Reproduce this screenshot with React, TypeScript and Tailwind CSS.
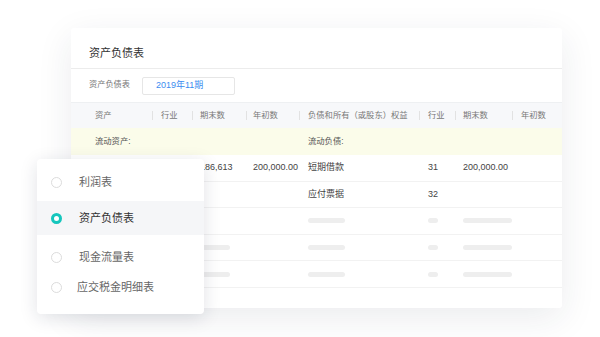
// App.tsx

type Col = { w: number; pl: number };

const cols: Col[] = [
  { w: 81, pl: 24 },
  { w: 40, pl: 9 },
  { w: 54, pl: 8 },
  { w: 53, pl: 7 },
  { w: 120, pl: 9 },
  { w: 36, pl: 9 },
  { w: 57, pl: 8 },
  { w: 50, pl: 9 },
];

const headers = ["资产", "行业", "期末数", "年初数", "负债和所有（或股东）权益", "行业", "期末数", "年初数"];

type Cell = string | { bar: number } | null;

const rows: Cell[][] = [
  [null, null, "186,613", "200,000.00", "短期借款", "31", "200,000.00", null],
  [null, null, null, null, "应付票据", "32", null, null],
  [null, null, null, null, { bar: 37 }, { bar: 10 }, { bar: 49 }, null],
  [{ bar: 40 }, null, { bar: 30 }, null, { bar: 37 }, { bar: 10 }, { bar: 49 }, null],
  [{ bar: 40 }, null, { bar: 30 }, null, { bar: 37 }, { bar: 10 }, { bar: 49 }, null],
];

const menu = [
  { label: "利润表", active: false },
  { label: "资产负债表", active: true },
  { label: "现金流量表", active: false },
  { label: "应交税金明细表", active: false },
];

const font = { fontFamily: '"Liberation Sans", "Noto Sans CJK SC", sans-serif' };

function Radio({ active }: { active: boolean }) {
  return active ? (
    <span className="w-[11px] h-[11px] rounded-full border-[3px] border-[#15c6bd] bg-white" />
  ) : (
    <span className="w-[11px] h-[11px] rounded-full border border-[#dcdcdc] bg-white" />
  );
}

export default function App() {
  return (
    <div className="relative w-[600px] h-[337px] bg-white overflow-hidden" style={font}>
      {/* Main card */}
      <div className="ml-[71px] mt-[28px] w-[491px] h-[280px] bg-white rounded-[3px] shadow-[0_10px_36px_rgba(30,40,70,0.09)]">
        <div className="h-[41px] pt-[17px] pl-[18px] border-b border-[#ececec] text-[11px] text-[#333]">
          资产负债表
        </div>

        <div className="h-[33px] flex items-center pl-[18px]">
          <span className="text-[8.2px] text-[#777]">资产负债表</span>
          <div className="ml-[12px] w-[93px] h-[18px] border border-[#e6e6e6] rounded-[2px] flex items-center pl-[13px] text-[9px] text-[#3b8cf0]">
            2019年11期
          </div>
        </div>

        {/* Header */}
        <div className="flex h-[26px] bg-[#f7f8fa] border-t border-[#eef0f2]">
          {cols.map((c, i) => (
            <div key={i} className="flex items-center" style={{ width: c.w }}>
              {i > 0 && <span className="w-px h-[9px] bg-[#e2e2e2]" />}
              <span
                className="text-[8.3px] text-[#777] whitespace-nowrap"
                style={{ marginLeft: i === 0 ? c.pl : c.pl - 1 }}
              >
                {headers[i]}
              </span>
            </div>
          ))}
        </div>

        {/* Section row */}
        <div className="flex h-[27px] bg-[#fbfcea] items-center text-[8.3px] text-[#555]">
          <span className="pl-[24px] w-[228px]">流动资产:</span>
          <span className="pl-[9px]">流动负债:</span>
        </div>

        {rows.map((r, ri) => (
          <div key={ri} className="flex h-[26.6px] border-b border-[#f2f2f2]">
            {r.map((cell, ci) => (
              <div
                key={ci}
                className="flex items-center text-[9px] text-[#444] whitespace-nowrap"
                style={{ width: cols[ci].w, paddingLeft: cols[ci].pl }}
              >
                {typeof cell === "string" && cell}
                {cell && typeof cell === "object" && (
                  <span className="h-[5px] rounded-full bg-[#eeeeee]" style={{ width: cell.bar }} />
                )}
              </div>
            ))}
          </div>
        ))}
      </div>

      {/* Dropdown overlay */}
      <div className="absolute left-[37px] top-[159px] w-[167px] h-[155px] bg-white rounded-[4px] shadow-[0_4px_18px_rgba(20,30,60,0.13)] pt-[5px]">
        {menu.map((m, i) => (
          <div
            key={m.label}
            className={`flex items-center pl-[14px] ${m.active ? "bg-[#f5f6f8]" : ""} ${
              i === 0 ? "h-[37px]" : i === 1 ? "h-[34px]" : "h-[30px]"
            } ${i === 2 ? "mt-[7px]" : ""}`}
          >
            <Radio active={m.active} />
            <span
              className={`text-[11px] ${m.active ? "text-[#333]" : "text-[#666]"} ${
                i === 3 ? "ml-[15px]" : "ml-[17px]"
              }`}
            >
              {m.label}
            </span>
          </div>
        ))}
      </div>
    </div>
  );
}
